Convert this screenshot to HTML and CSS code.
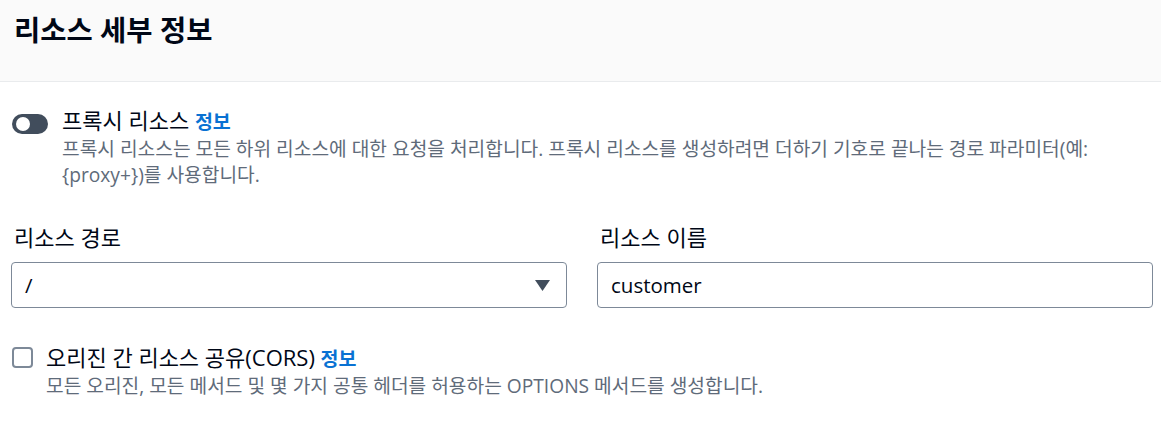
FILE: index.html
```html
<!DOCTYPE html>
<html lang="ko">
<head>
<meta charset="utf-8">
<link rel="stylesheet" href="styles.css">
</head>
<body>
<div class="panel">
  <div class="header"><h2 class="title">리소스 세부 정보</h2></div>
  <div class="content">
    <div class="option">
      <span class="toggle"><span class="knob"></span></span>
      <div class="option-text">
        <div class="option-label">프록시 리소스 <a class="info">정보</a></div>
        <div class="desc">프록시 리소스는 모든 하위 리소스에 대한 요청을 처리합니다. 프록시 리소스를 생성하려면 더하기 기호로 끝나는 경로 파라미터(예: {proxy+})를 사용합니다.</div>
      </div>
    </div>
    <div class="fields">
      <div class="field">
        <div class="field-label">리소스 경로</div>
        <div class="select"><span>/</span><svg class="caret" width="15" height="11" viewBox="0 0 15 11"><polygon points="0,0 15,0 7.5,11" fill="#414d5c"/></svg></div>
      </div>
      <div class="field">
        <div class="field-label">리소스 이름</div>
        <div class="input">customer</div>
      </div>
    </div>
    <div class="option check-option">
      <span class="checkbox"></span>
      <div class="option-text">
        <div class="option-label">오리진 간 리소스 공유(CORS) <a class="info">정보</a></div>
        <div class="desc">모든 오리진, 모든 메서드 및 몇 가지 공통 헤더를 허용하는 OPTIONS 메서드를 생성합니다.</div>
      </div>
    </div>
  </div>
</div>
</body>
</html>
```
FILE: styles.css
```css
* { box-sizing: border-box; }
body {
  margin: 0;
  background: #ffffff;
  font-family: "Open Sans", "Noto Sans CJK KR", sans-serif;
  color: #000716;
  font-size: 22px;
  line-height: 26px;
}
.header {
  height: 82px;
  background: #fafafa;
  border-bottom: 1px solid #e9ebed;
  padding: 13px 14px 0;
}
.title {
  margin: 0;
  font-size: 28.5px;
  line-height: 34px;
  font-weight: 700;
  color: #000716;
}
.content {
  padding: 24px 8px 0 11px;
}
.option {
  display: flex;
  gap: 14px;
  padding-left: 1px;
}
.toggle {
  flex: none;
  width: 36px;
  height: 20px;
  margin-top: 8px;
  border-radius: 10px;
  background: #414d5c;
  position: relative;
}
.knob {
  position: absolute;
  left: 4px;
  top: 3px;
  width: 14px;
  height: 14px;
  border-radius: 50%;
  background: #ffffff;
}
.option-label {
  color: #000716;
  font-size: 22px;
  line-height: 28px;
}
.info {
  color: #0972d3;
  font-weight: 700;
  font-size: 19.5px;
}
.desc {
  color: #5f6b7a;
  font-size: 19.2px;
  line-height: 26px;
}
.fields {
  display: grid;
  grid-template-columns: 1fr 1fr;
  gap: 30px;
  margin-top: 36px;
}
.field-label {
  padding-left: 3px;
  margin-bottom: 12px;
  line-height: 26px;
}
.select, .input {
  height: 46px;
  border: 1px solid #7d8998;
  border-radius: 4px;
  padding: 0 16px 0 13px;
  display: flex;
  align-items: center;
  justify-content: space-between;
  font-size: 20.5px;
}
.caret { display: block; }
.check-option {
  margin-top: 35px;
  gap: 13px;
}
.checkbox {
  flex: none;
  width: 21px;
  height: 21px;
  margin-top: 4px;
  border: 2px solid #7d8998;
  border-radius: 4px;
  background: #fff;
}
```
